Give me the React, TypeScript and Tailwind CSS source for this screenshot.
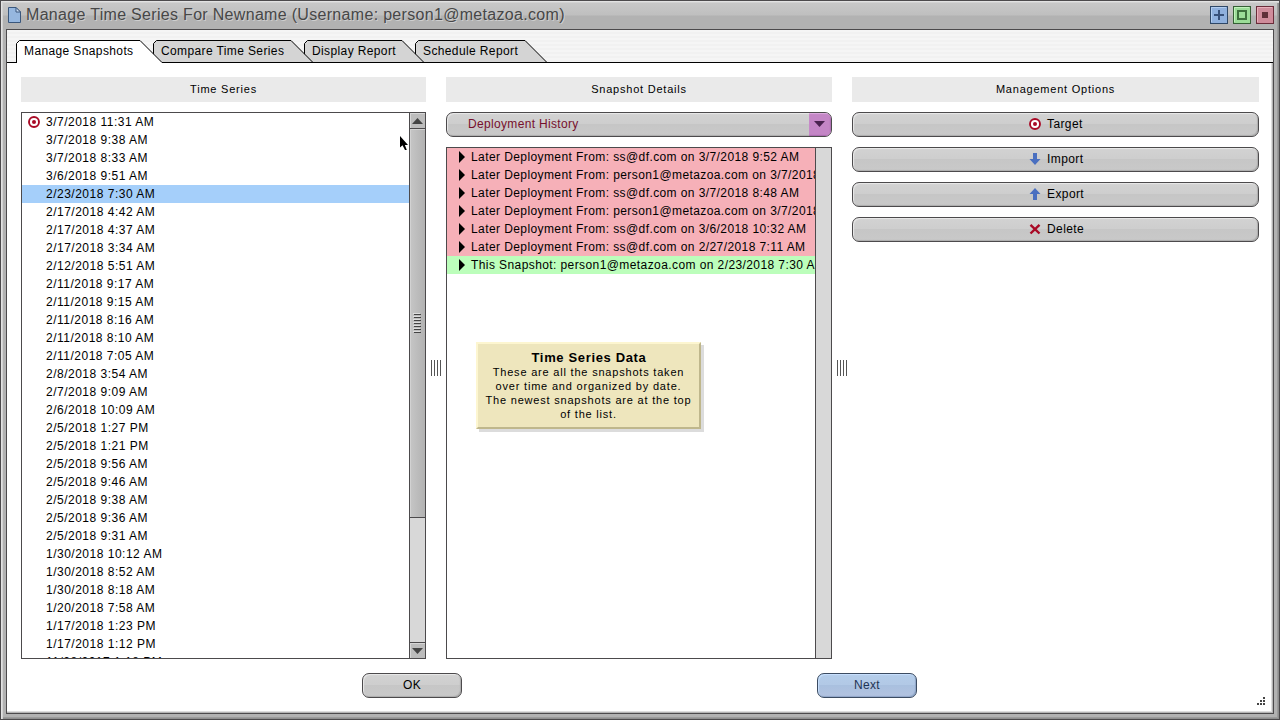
import React, { useState } from 'react';
import clsx from 'clsx';

const tabs = [
  { label: 'Manage Snapshots', width: 147, className: 'w-[147px] z-40' },
  { label: 'Compare Time Series', width: 161, className: 'w-[161px] -ml-2.5 z-30' },
  { label: 'Display Report', width: 121, className: 'w-[121px] -ml-2.5 z-20' },
  { label: 'Schedule Report', width: 133, className: 'w-[133px] -ml-2.5 z-10' },
];

const snapshots = [
  '3/7/2018 11:31 AM',
  '3/7/2018 9:38 AM',
  '3/7/2018 8:33 AM',
  '3/6/2018 9:51 AM',
  '2/23/2018 7:30 AM',
  '2/17/2018 4:42 AM',
  '2/17/2018 4:37 AM',
  '2/17/2018 3:34 AM',
  '2/12/2018 5:51 AM',
  '2/11/2018 9:17 AM',
  '2/11/2018 9:15 AM',
  '2/11/2018 8:16 AM',
  '2/11/2018 8:10 AM',
  '2/11/2018 7:05 AM',
  '2/8/2018 3:54 AM',
  '2/7/2018 9:09 AM',
  '2/6/2018 10:09 AM',
  '2/5/2018 1:27 PM',
  '2/5/2018 1:21 PM',
  '2/5/2018 9:56 AM',
  '2/5/2018 9:46 AM',
  '2/5/2018 9:38 AM',
  '2/5/2018 9:36 AM',
  '2/5/2018 9:31 AM',
  '1/30/2018 10:12 AM',
  '1/30/2018 8:52 AM',
  '1/30/2018 8:18 AM',
  '1/20/2018 7:58 AM',
  '1/17/2018 1:23 PM',
  '1/17/2018 1:12 PM',
  '11/28/2017 1:18 PM',
];

const deployments = [
  { text: 'Later Deployment From: ss@df.com on 3/7/2018 9:52 AM', current: false },
  { text: 'Later Deployment From: person1@metazoa.com on 3/7/2018 9:38 AM', current: false },
  { text: 'Later Deployment From: ss@df.com on 3/7/2018 8:48 AM', current: false },
  { text: 'Later Deployment From: person1@metazoa.com on 3/7/2018 8:33 AM', current: false },
  { text: 'Later Deployment From: ss@df.com on 3/6/2018 10:32 AM', current: false },
  { text: 'Later Deployment From: ss@df.com on 2/27/2018 7:11 AM', current: false },
  { text: 'This Snapshot: person1@metazoa.com on 2/23/2018 7:30 AM', current: true },
];

const TargetIcon = () => (
  <svg width="12" height="12" viewBox="0 0 12 12">
    <circle cx="6" cy="6" r="5" fill="#fff" stroke="#a90a26" strokeWidth="1.9" />
    <circle cx="6" cy="6" r="2" fill="#a90a26" />
  </svg>
);

const ImportIcon = () => (
  <svg width="12" height="12" viewBox="0 0 12 12">
    <path d="M4 0h4v6h3.5L6 12 .5 6H4z" fill="#4a6fc0" />
  </svg>
);

const ExportIcon = () => (
  <svg width="12" height="12" viewBox="0 0 12 12">
    <path d="M4 12h4V6h3.5L6 0 .5 6H4z" fill="#4a6fc0" />
  </svg>
);

const DeleteIcon = () => (
  <svg width="12" height="12" viewBox="0 0 12 12">
    <path d="M1.5 1.8 10.5 10.5M10.5 1.8 1.5 10.5" stroke="#a90a26" strokeWidth="2.4" />
  </svg>
);

const options = [
  { label: 'Target', icon: <TargetIcon /> },
  { label: 'Import', icon: <ImportIcon /> },
  { label: 'Export', icon: <ExportIcon /> },
  { label: 'Delete', icon: <DeleteIcon /> },
];

const raised =
  'h-[25px] shrink-0 rounded-[7px] border border-[#4c4a4c] bg-[linear-gradient(#d2d2d2_0%,#cecece_46%,#c6c6c6_50%,#c9c9c9_100%)] shadow-[inset_1px_1px_1px_#e9e9e9,inset_-1px_-1px_1px_#acacac]';

const TitleBar = () => (
  <div className="flex h-7 items-center pl-0.5">
    <svg width="13" height="16" viewBox="0 0 13 16">
      <path d="M.5.5H8L12.5 5v10.5H.5z" fill="#96b7df" stroke="#3a577c" />
      <path d="M8 .5V5h4.5z" fill="#c9dcf3" stroke="#3a577c" />
    </svg>
    <h1 className="ml-[5px] flex-1 text-[16px] leading-7 tracking-[0.31px] whitespace-nowrap text-[#474747] [text-shadow:1px_1px_0_#cfcfcf]">
      Manage Time Series For Newname (Username: person1@metazoa.com)
    </h1>
    <div className="flex gap-[5px]">
      <svg width="18" height="18" viewBox="0 0 18 18">
        <rect x=".5" y=".5" width="17" height="17" fill="#8fb0dd" stroke="#2f4867" />
        <path d="M1.5 16V1.5H16" fill="none" stroke="#b3cef0" />
        <path d="M8 4h2v4h4v2h-4v4H8v-4H4V8h4z" fill="#37517a" />
      </svg>
      <svg width="18" height="18" viewBox="0 0 18 18">
        <rect x=".5" y=".5" width="17" height="17" fill="#9bdc98" stroke="#356035" />
        <path d="M1.5 16V1.5H16" fill="none" stroke="#c2f3bd" />
        <rect x="5" y="5" width="8" height="8" fill="none" stroke="#3d703d" strokeWidth="2" />
      </svg>
      <svg width="18" height="18" viewBox="0 0 18 18">
        <rect x=".5" y=".5" width="17" height="17" fill="#cf8c9b" stroke="#6b2d3b" />
        <path d="M1.5 16V1.5H16" fill="none" stroke="#e9b0bb" />
        <rect x="6" y="6" width="6" height="6" fill="#5f3039" />
      </svg>
    </div>
  </div>
);

interface TabStripProps {
  active: number;
  onSelect: (index: number) => void;
}

const TabStrip: React.FC<TabStripProps> = ({ active, onSelect }) => (
  <div className="flex h-[33px] items-end border-b border-black bg-[repeating-linear-gradient(#f5f5f5_0,#f5f5f5_2px,#f1f1f1_2px,#f1f1f1_4px)] pl-[9px]">
    {tabs.map((tab, i) => (
      <button
        key={tab.label}
        onClick={() => onSelect(i)}
        className={clsx(
          'relative -mb-px flex h-[23px] pt-0.5 pl-2 tracking-[0.38px] whitespace-nowrap',
          tab.className
        )}
      >
        <svg width={tab.width} height="23" className="absolute top-0 left-0">
          <path
            d={`M.5 23V3.5l3-3H${tab.width - 23}l22 22V23z`}
            fill={i === active ? '#fff' : '#d4d4d4'}
          />
          <path
            d={`M.5 23V3.5l3-3H${tab.width - 23}l22 22`}
            fill="none"
            stroke="#000"
          />
          {i !== active && <path d={`M0 22.5H${tab.width}`} stroke="#000" />}
        </svg>
        <span className="relative">{tab.label}</span>
      </button>
    ))}
  </div>
);

const ColumnHeader = ({ children }: { children: React.ReactNode }) => (
  <div className="mb-2.5 flex h-[25px] shrink-0 items-center justify-center bg-[#eaeaea] pb-0.5 text-[11px] tracking-[0.78px]">
    {children}
  </div>
);

const Splitter = () => (
  <div className="flex w-5 shrink-0 items-center justify-center pr-px">
    <div className="flex h-4 gap-0.5">
      {[0, 1, 2, 3].map((n) => (
        <div key={n} className="w-px bg-[#555]" />
      ))}
    </div>
  </div>
);

const Scrollbar = () => (
  <div className="flex w-4 shrink-0 flex-col border-l border-[#4c4a4c] bg-[#d8d8d8]">
    <div className="flex h-4 items-center justify-center border-b border-[#4c4a4c] bg-[#bcbcbc] shadow-[inset_1px_1px_0_#d6d6d6]">
      <svg width="11" height="6" viewBox="0 0 11 6">
        <path d="M5.5 0 11 6H0z" fill="#444" />
      </svg>
    </div>
    <div className="flex h-[389px] items-center justify-center border-b border-[#4c4a4c] bg-[linear-gradient(90deg,#c6c6c6,#b2b2b2)] shadow-[inset_1px_1px_0_#d2d2d2]">
      <div className="flex w-[7px] flex-col gap-0.5">
        {[0, 1, 2, 3, 4, 5, 6].map((n) => (
          <div key={n} className="h-px bg-[#444] shadow-[-1px_-1px_0_#dedede]" />
        ))}
      </div>
    </div>
    <div className="mt-auto flex h-4 items-center justify-center border-t border-[#4c4a4c] bg-[#bcbcbc] shadow-[inset_1px_1px_0_#d6d6d6]">
      <svg width="11" height="6" viewBox="0 0 11 6">
        <path d="M5.5 6 11 0H0z" fill="#444" />
      </svg>
    </div>
  </div>
);

const HelpNote = () => (
  <div className="absolute top-[194px] left-[29px] h-[87px] w-[225px] border-2 border-t-[#fdf6d0] border-r-[#bfb78c] border-b-[#bfb78c] border-l-[#fdf6d0] bg-[#eee6bd] pt-[7px] text-center text-[11px] leading-[14px] tracking-[0.8px] whitespace-nowrap shadow-[3px_3px_0_#dcdcdc]">
    <p className="pl-px text-[13px] font-bold tracking-[0.65px]">Time Series Data</p>
    <p>These are all the snapshots taken</p>
    <p>over time and organized by date.</p>
    <p>The newest snapshots are at the top</p>
    <p>of the list.</p>
  </div>
);

const ResizeGrip = () => (
  <svg width="8" height="8" viewBox="0 0 8 8" fill="#444" className="absolute right-2 bottom-2">
    <path d="M6 0h2v2H6zM3 3h2v2H3zM6 3h2v2H6zM0 6h2v2H0zM3 6h2v2H3zM6 6h2v2H6z" />
  </svg>
);

const Pointer = () => (
  <svg width="9" height="15" viewBox="0 0 9 15" className="absolute top-[135px] left-[399px] z-50">
    <path d="M0 0v11.5l2.5-2.3L5 14h1.8L4.9 9H8z" fill="#000" />
  </svg>
);

export default function App() {
  const [activeTab, setActiveTab] = useState(0);
  const [selected, setSelected] = useState(4);

  return (
    <div className="relative flex h-[720px] w-[1280px] flex-col overflow-hidden border border-[#4c4a4c] bg-[linear-gradient(#c9c9c9_0px,#bfbfbf_14px,#b2b2b2_15px,#b2b2b2_100%)] px-[5px] pb-[5px] font-['Liberation_Sans',Arial,sans-serif] text-[12px] leading-[18px] tracking-[0.5px] text-black shadow-[inset_1px_1px_0_#e2e2e2,inset_2px_2px_0_#d2d2d2,inset_-1px_-1px_0_#8e8e8e,inset_-2px_-2px_0_#9c9c9c]">
      <TitleBar />

      <div className="relative flex flex-1 flex-col border border-[#4c4a4c] bg-white shadow-[inset_-1px_-1px_0_#b4b4b4,inset_-2px_-2px_0_#dedede]">
        <TabStrip active={activeTab} onSelect={setActiveTab} />

        <div className="flex h-[596px] pt-3.5 pl-3.5">
          {/* Time series */}
          <section className="flex w-[405px] flex-col">
            <ColumnHeader>Time Series</ColumnHeader>
            <div className="flex min-h-0 flex-1 border border-[#4c4a4c]">
              <ul className="flex-1 overflow-hidden">
                {snapshots.map((date, i) => (
                  <li
                    key={date}
                    onClick={() => setSelected(i)}
                    className={clsx('flex h-[18px] items-center', i === selected && 'bg-[#a5cffa]')}
                  >
                    <span className="flex w-6 justify-center">{i === 0 && <TargetIcon />}</span>
                    {date}
                  </li>
                ))}
              </ul>
              <Scrollbar />
            </div>
          </section>

          <Splitter />

          {/* Snapshot details */}
          <section className="flex w-[386px] flex-col">
            <ColumnHeader>Snapshot Details</ColumnHeader>
            <button className={clsx(raised, 'mb-2.5 flex items-center overflow-hidden text-[#77102c]')}>
              <span className="flex-1 pb-0.5 pl-[21px] text-left tracking-[0.33px]">Deployment History</span>
              <span className="flex h-full w-[22px] items-center justify-center bg-[#c486c6] pr-0.5 pb-px shadow-[inset_0_1px_1px_#dfafe0,inset_-1px_-1px_1px_#a96bad]">
                <svg width="11" height="6" viewBox="0 0 11 6">
                  <path d="M5.5 6 11 0H0z" fill="#4a2350" />
                </svg>
              </span>
            </button>
            <div className="relative flex min-h-0 flex-1 border border-[#4c4a4c]">
              <ul className="min-w-0 flex-1">
                {deployments.map((item) => (
                  <li
                    key={item.text}
                    className={clsx(
                      'flex h-[18px] items-center overflow-hidden pl-3 tracking-[0.41px] whitespace-nowrap',
                      item.current ? 'bg-[#bcfebb]' : 'bg-[#f6b0b8]'
                    )}
                  >
                    <svg width="6" height="12" viewBox="0 0 6 12" className="mr-1.5 shrink-0">
                      <path d="M0 0 6 6 0 12z" fill="#000" />
                    </svg>
                    {item.text}
                  </li>
                ))}
              </ul>
              <div className="w-4 shrink-0 border-l border-[#4c4a4c] bg-[#d8d8d8]" />
              <HelpNote />
            </div>
          </section>

          <Splitter />

          {/* Management options */}
          <section className="flex w-[407px] flex-col">
            <ColumnHeader>Management Options</ColumnHeader>
            <div className="flex flex-col gap-2.5">
              {options.map((option) => (
                <button key={option.label} className={clsx(raised, 'flex items-center pb-px pl-44')}>
                  {option.icon}
                  <span className="ml-1.5 pb-px tracking-[0.4px]">{option.label}</span>
                </button>
              ))}
            </div>
          </section>
        </div>

        <footer className="flex justify-center gap-[355px] pt-3.5 pr-px">
          <button className={clsx(raised, 'w-[100px] pb-0.5 tracking-[0.3px]')}>OK</button>
          <button className="h-[25px] w-[100px] rounded-[7px] border border-[#3c4c62] bg-[linear-gradient(#b4cdea_0%,#b2c9e6_46%,#a9c0df_50%,#b3c3e0_100%)] pb-0.5 tracking-[0.3px] text-[#1f3454] shadow-[inset_1px_1px_1px_#c9e2ff,inset_-1px_-1px_1px_#8fa6c8]">
            Next
          </button>
        </footer>
        <ResizeGrip />
      </div>

      <Pointer />
    </div>
  );
}
